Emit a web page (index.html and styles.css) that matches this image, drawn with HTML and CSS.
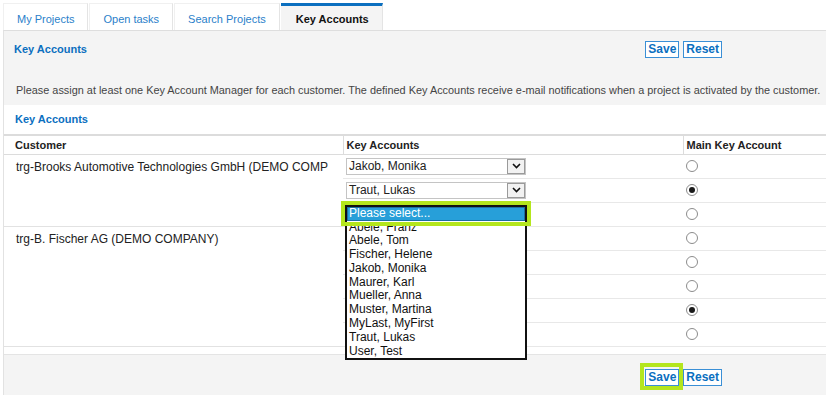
FILE: index.html
```html
<!DOCTYPE html>
<html lang="en">
<head>
    <meta charset="UTF-8">
    <title>Key Accounts</title>
    <link rel="stylesheet" href="styles.css">
</head>
<body>
    <div class="tabs">
        <a class="tab">My Projects</a>
        <a class="tab">Open tasks</a>
        <a class="tab">Search Projects</a>
        <a class="tab active">Key Accounts</a>
    </div>

    <div class="panel">
        <div class="panel-head">
            <div class="panel-title">Key Accounts</div>
            <div class="actions">
                <button class="btn">Save</button>
                <button class="btn">Reset</button>
            </div>
        </div>

        <p class="description">
            Please assign at least one Key Account Manager for each customer. The defined Key Accounts receive e-mail notifications when a project is activated by the customer.
        </p>

        <div class="section">
            <div class="section-title">Key Accounts</div>
            <table class="accounts">
                <thead>
                    <tr>
                        <th class="col-customer">Customer</th>
                        <th class="col-key">Key Accounts</th>
                        <th class="col-main">Main Key Account</th>
                    </tr>
                </thead>
                <tbody>
                    <tr>
                        <td class="customer" rowspan="3">trg-Brooks Automotive Technologies GmbH (DEMO COMP</td>
                        <td><div class="select">Jakob, Monika<span class="arrow"><svg width="9" height="6" viewBox="0 0 9 6"><path d="M1 1l3.5 3.5L8 1" fill="none" stroke="#111" stroke-width="1.6"/></svg></span></div></td>
                        <td><span class="radio"></span></td>
                    </tr>
                    <tr>
                        <td><div class="select">Traut, Lukas<span class="arrow"><svg width="9" height="6" viewBox="0 0 9 6"><path d="M1 1l3.5 3.5L8 1" fill="none" stroke="#111" stroke-width="1.6"/></svg></span></div></td>
                        <td><span class="radio checked"></span></td>
                    </tr>
                    <tr>
                        <td>
                            <div class="dropdown">
                                <ul class="listbox">
                                    <li class="selected">Please select...</li>
                                    <li>Abele, Franz</li>
                                    <li>Abele, Tom</li>
                                    <li>Fischer, Helene</li>
                                    <li>Jakob, Monika</li>
                                    <li>Maurer, Karl</li>
                                    <li>Mueller, Anna</li>
                                    <li>Muster, Martina</li>
                                    <li>MyLast, MyFirst</li>
                                    <li>Traut, Lukas</li>
                                    <li>User, Test</li>
                                </ul>
                                <div class="callout callout-list"></div>
                            </div>
                        </td>
                        <td><span class="radio"></span></td>
                    </tr>
                    <tr>
                        <td class="customer" rowspan="5">trg-B. Fischer AG (DEMO COMPANY)</td>
                        <td></td>
                        <td><span class="radio"></span></td>
                    </tr>
                    <tr>
                        <td></td>
                        <td><span class="radio"></span></td>
                    </tr>
                    <tr>
                        <td></td>
                        <td><span class="radio"></span></td>
                    </tr>
                    <tr>
                        <td></td>
                        <td><span class="radio checked"></span></td>
                    </tr>
                    <tr>
                        <td></td>
                        <td><span class="radio"></span></td>
                    </tr>
                </tbody>
            </table>
        </div>

        <div class="panel-foot">
            <div class="actions">
                <span class="marked">
                    <button class="btn">Save</button>
                    <span class="callout callout-save"></span>
                </span>
                <button class="btn">Reset</button>
            </div>
        </div>
    </div>
</body>
</html>
```

FILE: styles.css
```css
/* Base */
* {
    box-sizing: border-box;
}

body {
    margin: 0;
    padding: 3px 0 0 3px;
    font-family: 'Liberation Sans', Arial, sans-serif;
    color: #222;
    background: #fff;
    overflow: hidden;
}

/* Tabs */
.tabs {
    display: flex;
    height: 27px;
}

.tab {
    display: flex;
    align-items: center;
    padding: 4px 13px 0;
    margin-right: 1px;
    font-size: 11px;
    color: #2b7fca;
    background: #fff;
    border-top: 1px solid #f0f0f0;
    border-right: 1px solid #e4e4e4;
    border-left: 1px solid #f0f0f0;
}

.tab.active {
    background: #f4f4f4;
    color: #111;
    font-weight: bold;
    border-top: 3px solid #0b6fbf;
    padding: 1px 13px 0 15px;
    border-left: none;
    border-right: 1px solid #e4e4e4;
}

/* Panel */
.panel {
    background: #f4f4f4;
    border-top: 1px solid #dedede;
    border-left: 1px solid #e2e2e2;
    min-height: 365px;
}

.panel-head {
    display: flex;
    align-items: center;
    padding: 10px 0 0 10px;
}

.panel-title,
.section-title {
    font-size: 11px;
    font-weight: bold;
    color: #0b6fbf;
    flex: 1;
    margin-top: -2px;
}

.actions {
    display: flex;
    gap: 4px;
    margin-right: 104px;
    margin-left: auto;
}

.btn {
    font-family: inherit;
    font-size: 12px;
    font-weight: bold;
    color: #0b6fbf;
    background: #fff;
    border: 1px solid #3a8fd6;
    padding: 0 2px;
    height: 17px;
    line-height: 15px;
    cursor: pointer;
}

.description {
    margin: 25px 0 8px;
    padding-left: 12px;
    font-size: 10.9px;
    line-height: 14px;
    color: #444;
    white-space: nowrap;
}

/* Table section */
.section {
    background: #fff;
    padding: 7px 0 7px;
}

.section-title {
    padding-left: 11px;
    line-height: 14px;
    margin: 0 0 8px;
}

.accounts {
    width: 100%;
    border-collapse: collapse;
    font-size: 12px;
}

.accounts th {
    text-align: left;
    font-size: 11px;
    font-weight: bold;
    height: 19px;
    padding: 0 3px;
    border-top: 2px solid #dcdcdc;
    border-bottom: 1px solid #dcdcdc;
}

.accounts th + th {
    border-left: 1px solid #dcdcdc;
}

.col-customer {
    width: 339px;
}

.col-key {
    width: 340px;
}

.accounts th.col-customer {
    padding-left: 11px;
}

.accounts td {
    height: 24px;
    padding: 0 2px 0 3px;
    border-bottom: 1px solid #e8e8e8;
    vertical-align: middle;
}

.accounts td.customer {
    vertical-align: top;
    padding: 5px 0 0 12px;
    white-space: nowrap;
    overflow: hidden;
    color: #222;
    border-bottom: 1px solid #e2e2e2;
}

/* Select boxes */
.select {
    position: relative;
    width: 180px;
    height: 17px;
    border: 1px solid #c4c4c4;
    padding-left: 2px;
    line-height: 15px;
    background: #fff;
}

.arrow {
    position: absolute;
    right: 0;
    top: 0;
    width: 18px;
    height: 15px;
    border: 1px solid #9a9a9a;
    background: #f2f2f2;
    display: flex;
    align-items: center;
    justify-content: center;
}

.dropdown {
    position: relative;
    height: 17px;
}

.listbox {
    position: absolute;
    left: -1px;
    top: -1px;
    width: 182px;
    margin: 0;
    padding: 0;
    list-style: none;
    background: #fff;
    border: 2px solid #111;
    z-index: 2;
}

.listbox li {
    height: 13.8px;
    line-height: 13.8px;
    padding-left: 2px;
    font-size: 12px;
    color: #111;
}

.listbox li.selected {
    height: 14px;
    background: #279fd9;
    color: #fff;
    box-shadow: inset 0 0 0 1px #1d6ea0;
}

/* Annotation frames */
.callout {
    position: absolute;
    border: 4px solid #b4e61d;
    pointer-events: none;
    z-index: 3;
}

.callout-list {
    left: -5px;
    top: -5px;
    width: 190px;
    height: 25px;
}

.marked {
    position: relative;
    display: inline-flex;
}

.callout-save {
    left: -5px;
    top: -6px;
    width: 43px;
    height: 27px;
}

/* Radios */
.radio {
    display: block;
    width: 12px;
    height: 12px;
    border: 1px solid #8c8c8c;
    border-radius: 50%;
    background: #fff;
    position: relative;
}

.radio.checked::after {
    content: "";
    position: absolute;
    left: 2px;
    top: 2px;
    width: 6px;
    height: 6px;
    border-radius: 50%;
    background: #1a1a1a;
}

/* Footer */
.panel-foot {
    display: flex;
    border-top: 1px solid #e4e4e4;
    padding-top: 14px;
    height: 42px;
}
```
